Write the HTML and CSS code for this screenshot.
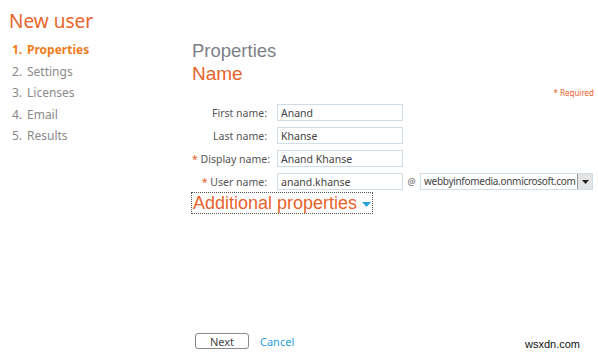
FILE: index.html
```html
<!DOCTYPE html>
<html lang="en">
<head>
    <meta charset="UTF-8">
    <meta name="viewport" content="width=device-width, initial-scale=1.0">
    <title>New user</title>
    <link rel="stylesheet" href="styles.css">
</head>
<body>
    <div class="page">
        <!-- Wizard steps -->
        <div class="sidebar">
            <h1 class="page-title">New user</h1>
            <ol class="steps">
                <li class="step step-active"><span class="step-num">1.</span>Properties</li>
                <li class="step"><span class="step-num">2.</span>Settings</li>
                <li class="step"><span class="step-num">3.</span>Licenses</li>
                <li class="step"><span class="step-num">4.</span>Email</li>
                <li class="step"><span class="step-num">5.</span>Results</li>
            </ol>
        </div>

        <!-- Step content -->
        <div class="main">
            <h2 class="section-title">Properties</h2>
            <h3 class="group-title">Name</h3>
            <div class="required-note">* Required</div>

            <form class="user-form">
                <label class="form_label">First name:</label>
                <input type="text" class="form_input" value="Anand">
                <span></span><span></span>

                <label class="form_label">Last name:</label>
                <input type="text" class="form_input" value="Khanse">
                <span></span><span></span>

                <label class="form_label"><span class="star">*</span> Display name:</label>
                <input type="text" class="form_input" value="Anand Khanse">
                <span></span><span></span>

                <label class="form_label"><span class="star">*</span> User name:</label>
                <input type="text" class="form_input" value="anand.khanse">
                <span class="at">@</span>
                <div class="domain-select">
                    <span class="domain-value">webbyinfomedia.onmicrosoft.com</span>
                    <span class="domain-btn">
                        <svg width="7" height="4" viewBox="0 0 7 4"><path d="M0 0h7L3.5 4z" fill="#222"/></svg>
                    </span>
                </div>
            </form>

            <div class="more-toggle">
                Additional properties
                <svg class="more-arrow" width="9" height="5" viewBox="0 0 9 5"><path d="M0 0h9L4.5 5z" fill="#2aa0dc"/></svg>
            </div>

            <div class="actions">
                <button type="button" class="btn-next">Next</button>
                <a class="link-cancel">Cancel</a>
            </div>
        </div>
    </div>

    <div class="watermark">wsxdn.com</div>
</body>
</html>
```

FILE: styles.css
```css
body {
    margin: 0;
    background: #fff;
    font-family: "Noto Sans", "Open Sans", sans-serif;
    color: #444;
}

.page {
    display: flex;
    height: 354px;
}

.sidebar {
    width: 183px;
    padding: 9px 0 0 9px;
}

.page-title {
    margin: 0;
    font-size: 19px;
    font-weight: normal;
    line-height: 24px;
    color: #e8652a;
}

.steps {
    list-style: none;
    margin: 6px 0 0 3px;
    padding: 0;
}

.step {
    font-size: 12px;
    line-height: 21.5px;
    color: #8a8a8a;
}

.step-num {
    display: inline-block;
    width: 15px;
}

.step-active {
    color: #f07c1c;
    font-weight: bold;
}

.main {
    width: 403px;
    padding-top: 39px;
    display: flex;
    flex-direction: column;
}

.section-title {
    margin: 0;
    font-family: "Liberation Sans", Arial, sans-serif;
    font-size: 18.5px;
    font-weight: normal;
    line-height: 23px;
    color: #7d8187;
}

.group-title {
    margin: 0;
    font-family: "Liberation Sans", Arial, sans-serif;
    font-size: 19px;
    font-weight: normal;
    line-height: 24px;
    color: #e8622a;
}

.required-note {
    align-self: flex-end;
    font-size: 8px;
    line-height: 10px;
    color: #e8622a;
    margin-top: 2px;
    margin-right: 1px;
}

.user-form {
    display: grid;
    grid-template-columns: 85px 126px 17px 173px;
    row-gap: 6px;
    align-items: center;
    margin-top: 6px;
}

.form_label {
    font-size: 10.5px;
    color: #555;
    text-align: right;
    padding-right: 10px;
    white-space: nowrap;
}

.star {
    color: #e8622a;
}

.form_input {
    box-sizing: border-box;
    width: 126px;
    height: 17px;
    padding: 0 3px;
    border: 1px solid #cfdde8;
    font-family: "Noto Sans", sans-serif;
    font-size: 10.5px;
    color: #444;
}

.at {
    font-size: 9px;
    color: #666;
    text-align: center;
}

.domain-select {
    display: flex;
    height: 17px;
    box-sizing: border-box;
    border: 1px solid #cfdde8;
}

.domain-value {
    flex: 1;
    font-size: 10px;
    letter-spacing: -0.3px;
    line-height: 15px;
    padding-left: 3px;
    color: #444;
    white-space: nowrap;
}

.domain-btn {
    width: 14px;
    border-left: 1px solid #999;
    background: #e4e4e4;
    display: flex;
    align-items: center;
    justify-content: center;
}

.more-toggle {
    align-self: flex-start;
    box-sizing: border-box;
    width: 182px;
    height: 22px;
    margin-top: 2px;
    margin-left: -1px;
    padding-left: 1px;
    border: 1px dotted #555;
    font-family: "Liberation Sans", Arial, sans-serif;
    font-size: 18px;
    line-height: 20px;
    color: #e8622a;
    white-space: nowrap;
}

.more-arrow {
    vertical-align: middle;
}

.actions {
    margin-top: auto;
    margin-bottom: 5px;
    display: flex;
    align-items: center;
    gap: 11px;
    padding-left: 3px;
}

.btn-next {
    width: 54px;
    height: 16px;
    padding: 0;
    border: 1px solid #8a8a8a;
    border-radius: 3px;
    background: #fff;
    font-family: "Noto Sans", sans-serif;
    font-size: 11px;
    color: #444;
}

.link-cancel {
    font-size: 11px;
    color: #2a9fd8;
}

.watermark {
    position: absolute;
    left: 525px;
    top: 338px;
    font-family: "Liberation Sans", Arial, sans-serif;
    font-size: 11px;
    color: #111;
}
```
